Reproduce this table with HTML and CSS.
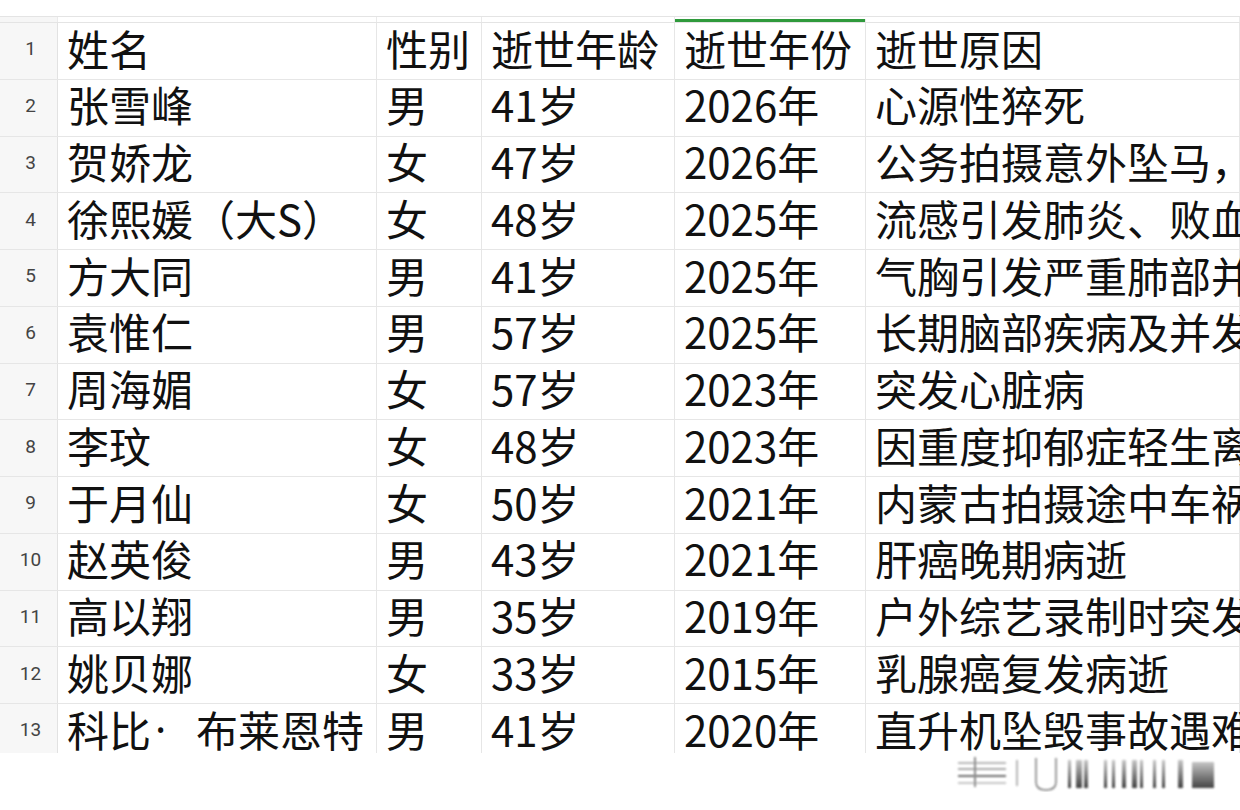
FILE: index.html
```html
<!DOCTYPE html>
<html lang="zh">
<head>
<meta charset="utf-8">
<link rel="stylesheet" href="styles.css">
</head>
<body>
<div class="page">
  <div class="topband"></div>
  <div class="colhead">
    <div class="ch c0"></div><div class="ch c1"></div><div class="ch c2"></div><div class="ch c3"></div><div class="ch c4 active"></div><div class="ch c5"></div>
  </div>
  <div class="sheet">
    <div class="row"><div class="num">1</div><div class="cell">姓名</div><div class="cell">性别</div><div class="cell">逝世年龄</div><div class="cell">逝世年份</div><div class="cell last">逝世原因</div></div>
    <div class="row"><div class="num">2</div><div class="cell">张雪峰</div><div class="cell">男</div><div class="cell">41岁</div><div class="cell">2026年</div><div class="cell last">心源性猝死</div></div>
    <div class="row"><div class="num">3</div><div class="cell">贺娇龙</div><div class="cell">女</div><div class="cell">47岁</div><div class="cell">2026年</div><div class="cell last">公务拍摄意外坠马，抢救无效</div></div>
    <div class="row"><div class="num">4</div><div class="cell">徐熙媛（大S）</div><div class="cell">女</div><div class="cell">48岁</div><div class="cell">2025年</div><div class="cell last">流感引发肺炎、败血症</div></div>
    <div class="row"><div class="num">5</div><div class="cell">方大同</div><div class="cell">男</div><div class="cell">41岁</div><div class="cell">2025年</div><div class="cell last">气胸引发严重肺部并发症</div></div>
    <div class="row"><div class="num">6</div><div class="cell">袁惟仁</div><div class="cell">男</div><div class="cell">57岁</div><div class="cell">2025年</div><div class="cell last">长期脑部疾病及并发症</div></div>
    <div class="row"><div class="num">7</div><div class="cell">周海媚</div><div class="cell">女</div><div class="cell">57岁</div><div class="cell">2023年</div><div class="cell last">突发心脏病</div></div>
    <div class="row"><div class="num">8</div><div class="cell">李玟</div><div class="cell">女</div><div class="cell">48岁</div><div class="cell">2023年</div><div class="cell last">因重度抑郁症轻生离世</div></div>
    <div class="row"><div class="num">9</div><div class="cell">于月仙</div><div class="cell">女</div><div class="cell">50岁</div><div class="cell">2021年</div><div class="cell last">内蒙古拍摄途中车祸</div></div>
    <div class="row"><div class="num">10</div><div class="cell">赵英俊</div><div class="cell">男</div><div class="cell">43岁</div><div class="cell">2021年</div><div class="cell last">肝癌晚期病逝</div></div>
    <div class="row"><div class="num">11</div><div class="cell">高以翔</div><div class="cell">男</div><div class="cell">35岁</div><div class="cell">2019年</div><div class="cell last">户外综艺录制时突发心脏骤停</div></div>
    <div class="row"><div class="num">12</div><div class="cell">姚贝娜</div><div class="cell">女</div><div class="cell">33岁</div><div class="cell">2015年</div><div class="cell last">乳腺癌复发病逝</div></div>
    <div class="row"><div class="num">13</div><div class="cell">科比<span class="dot">·</span>布莱恩特</div><div class="cell">男</div><div class="cell">41岁</div><div class="cell">2020年</div><div class="cell last">直升机坠毁事故遇难</div></div>
  </div>
  <svg class="mark" width="260" height="40" viewBox="0 0 260 40">
    <defs>
      <filter id="bl" x="-10%" y="-10%" width="120%" height="120%"><feGaussianBlur stdDeviation="1.2"/></filter>
      <linearGradient id="gv" x1="0" y1="0" x2="0" y2="1"><stop offset="0" stop-color="#bbb"/><stop offset="1" stop-color="#222"/></linearGradient>
    </defs>
    <g filter="url(#bl)" opacity="0.85">
      <rect x="2" y="10" width="48" height="2" fill="#aaa"/>
      <rect x="2" y="16" width="48" height="2" fill="#999"/>
      <rect x="2" y="23" width="48" height="2" fill="#555"/>
      <rect x="2" y="30" width="48" height="2" fill="#bbb"/>
      <rect x="18" y="5" width="2" height="30" fill="#777"/>
      <rect x="60" y="8" width="2" height="26" fill="#aaa"/>
      <path d="M80 6 V30 Q80 38 90 38 Q100 38 100 30 V6" fill="none" stroke="#666" stroke-width="1.5"/>
      <rect x="112" y="8" width="3" height="28" fill="url(#gv)"/>
      <rect x="120" y="8" width="6" height="28" fill="url(#gv)"/>
      <rect x="128" y="8" width="4" height="28" fill="url(#gv)"/>
      <rect x="148" y="8" width="3" height="28" fill="url(#gv)"/>
      <rect x="156" y="8" width="3" height="28" fill="url(#gv)"/>
      <rect x="166" y="8" width="4" height="28" fill="url(#gv)"/>
      <rect x="176" y="8" width="5" height="28" fill="url(#gv)"/>
      <rect x="184" y="8" width="3" height="28" fill="url(#gv)"/>
      <rect x="197" y="8" width="3" height="28" fill="url(#gv)"/>
      <rect x="206" y="8" width="3" height="28" fill="url(#gv)"/>
      <rect x="222" y="8" width="5" height="28" fill="url(#gv)"/>
      <rect x="236" y="10" width="22" height="26" fill="url(#gv)"/>
    </g>
  </svg>
</div>
</body>
</html>
```

FILE: styles.css
```css
html, body {
  margin: 0;
  padding: 0;
  background: #ffffff;
}
body {
  width: 1240px;
  height: 810px;
  overflow: hidden;
  font-family: "Noto Sans CJK SC", "Noto Sans", sans-serif;
  color: #111;
}
.page {
  position: relative;
  width: 1240px;
  height: 810px;
  overflow: hidden;
}
.topband {
  height: 16px;
  border-bottom: 1px solid #e4e4e4;
}
.colhead {
  display: grid;
  grid-template-columns: 58px 319px 105px 193px 191px 1fr;
  height: 5px;
}
.ch {
  border-right: 1px solid #eaeaea;
}
.ch.c0 { background: #f6f6f6; }
.ch.active { background: #2f9a3c; margin-top: 2px; height: 3px; }
.sheet {
  height: 730px;
  overflow: hidden;
  border-top: 1px solid #e4e4e4;
}
.row {
  display: grid;
  grid-template-columns: 58px 319px 105px 193px 191px 1fr;
  height: 56.75px;
  box-sizing: border-box;
  border-bottom: 1px solid #e6e6e6;
}
.num {
  background: #f7f7f7;
  border-right: 1px solid #e2e2e2;
  display: flex;
  align-items: center;
  justify-content: center;
  font-family: "Roboto", "Liberation Sans", sans-serif;
  font-size: 19px;
  color: #444;
  padding-left: 4px;
  padding-bottom: 4px;
}
.cell {
  border-right: 1px solid #e6e6e6;
  display: flex;
  align-items: center;
  padding-left: 9px;
  padding-bottom: 6px;
  font-size: 42px;
  line-height: 1.15;
  white-space: nowrap;
}
.cell.last {
  min-width: 0;
}
.dot {
  font-family: "Noto Sans", sans-serif;
  display: inline-block;
  width: 45px;
  padding-left: 4px;
  box-sizing: border-box;
}
.mark {
  position: absolute;
  left: 956px;
  top: 752px;
}
```
